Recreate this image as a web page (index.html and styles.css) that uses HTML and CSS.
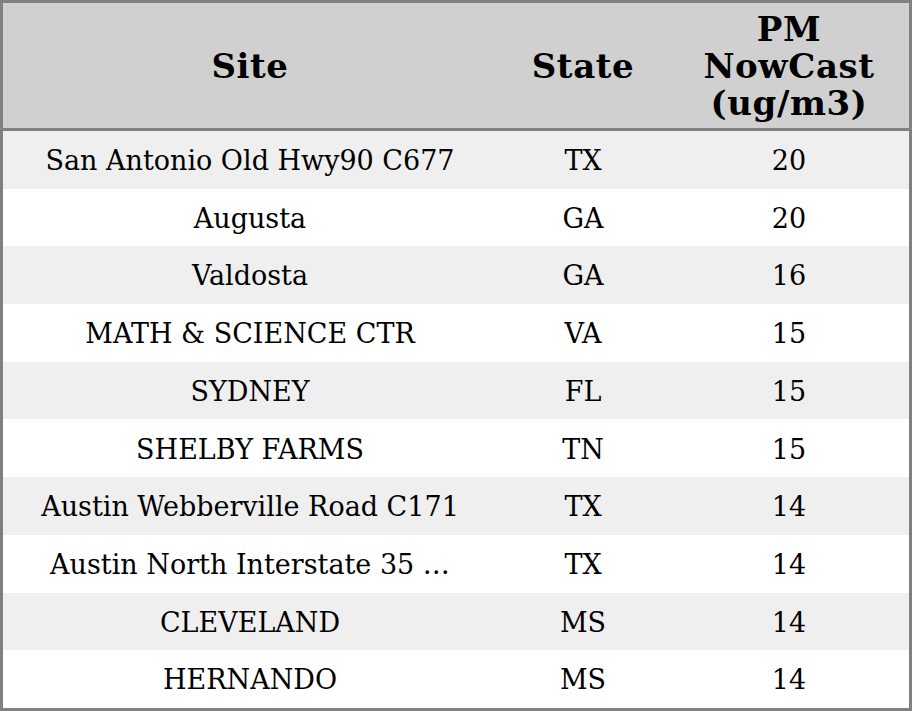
FILE: index.html
```html
<!DOCTYPE html>
<html>
<head>
<meta charset="utf-8">
<link rel="stylesheet" href="styles.css">
</head>
<body>
<table class="aq-table">
  <colgroup>
    <col class="col-site">
    <col class="col-state">
    <col class="col-pm">
  </colgroup>
  <thead>
    <tr>
      <th>Site</th>
      <th>State</th>
      <th>PM<br>NowCast<br>(ug/m3)</th>
    </tr>
  </thead>
  <tbody>
    <tr><td>San Antonio Old Hwy90 C677</td><td>TX</td><td>20</td></tr>
    <tr><td>Augusta</td><td>GA</td><td>20</td></tr>
    <tr><td>Valdosta</td><td>GA</td><td>16</td></tr>
    <tr><td>MATH &amp; SCIENCE CTR</td><td>VA</td><td>15</td></tr>
    <tr><td>SYDNEY</td><td>FL</td><td>15</td></tr>
    <tr><td>SHELBY FARMS</td><td>TN</td><td>15</td></tr>
    <tr><td>Austin Webberville Road C171</td><td>TX</td><td>14</td></tr>
    <tr><td>Austin North Interstate 35 …</td><td>TX</td><td>14</td></tr>
    <tr><td>CLEVELAND</td><td>MS</td><td>14</td></tr>
    <tr><td>HERNANDO</td><td>MS</td><td>14</td></tr>
  </tbody>
</table>
</body>
</html>
```
FILE: styles.css
```css
html, body {
  margin: 0;
  padding: 0;
  background: #ffffff;
}
.aq-table {
  width: 912px;
  table-layout: fixed;
  border-collapse: separate;
  border-spacing: 0;
  border: 3px solid #808080;
  font-family: "DejaVu Serif", serif;
  color: #000;
}
.col-site { width: 494px; }
.col-state { width: 172px; }
.col-pm { width: 240px; }
.aq-table th {
  background: #d0d0d0;
  font-size: 34px;
  font-weight: bold;
  letter-spacing: 0.6px;
  line-height: 37px;
  padding: 8px 0 6px;
  text-align: center;
  border-bottom: 3px solid #808080;
}
.aq-table td {
  font-size: 27px;
  line-height: 28px;
  padding: 16.1px 0 13.6px;
  text-align: center;
  white-space: nowrap;
}
.aq-table tbody tr:nth-child(odd) td {
  background: #efefef;
}
```
